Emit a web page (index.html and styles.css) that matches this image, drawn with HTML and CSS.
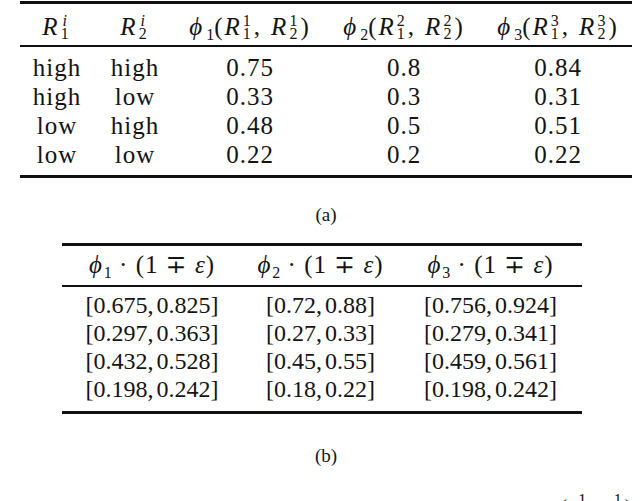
FILE: index.html
```html
<!DOCTYPE html>
<html>
<head>
<meta charset="utf-8">
<link rel="stylesheet" href="styles.css">
</head>
<body>
<div class="figure">
  <table class="tbl tbl-a">
    <thead>
      <tr>
        <th class="a1"><i>R</i><span class="ss"><sup><i>i</i></sup><sub>1</sub></span></th>
        <th class="a2"><i>R</i><span class="ss"><sup><i>i</i></sup><sub>2</sub></span></th>
        <th class="a3"><i>ϕ</i><sub class="s1">1</sub>(<i>R</i><span class="ss"><sup>1</sup><sub>1</sub></span>,<span class="th"></span><i>R</i><span class="ss"><sup>1</sup><sub>2</sub></span>)</th>
        <th class="a4"><i>ϕ</i><sub class="s1">2</sub>(<i>R</i><span class="ss"><sup>2</sup><sub>1</sub></span>,<span class="th"></span><i>R</i><span class="ss"><sup>2</sup><sub>2</sub></span>)</th>
        <th class="a5"><i>ϕ</i><sub class="s1">3</sub>(<i>R</i><span class="ss"><sup>3</sup><sub>1</sub></span>,<span class="th"></span><i>R</i><span class="ss"><sup>3</sup><sub>2</sub></span>)</th>
      </tr>
    </thead>
    <tbody>
      <tr><td>high</td><td>high</td><td>0.75</td><td>0.8</td><td>0.84</td></tr>
      <tr><td>high</td><td>low</td><td>0.33</td><td>0.3</td><td>0.31</td></tr>
      <tr><td>low</td><td>high</td><td>0.48</td><td>0.5</td><td>0.51</td></tr>
      <tr><td>low</td><td>low</td><td>0.22</td><td>0.2</td><td>0.22</td></tr>
    </tbody>
  </table>
  <p class="caption caption-a">(a)</p>

  <table class="tbl tbl-b">
    <thead>
      <tr>
        <th class="b1"><i>ϕ</i><sub class="s1">1</sub> · (1 ∓ <i>ε</i>)</th>
        <th class="b2"><i>ϕ</i><sub class="s1">2</sub> · (1 ∓ <i>ε</i>)</th>
        <th class="b3"><i>ϕ</i><sub class="s1">3</sub> · (1 ∓ <i>ε</i>)</th>
      </tr>
    </thead>
    <tbody>
      <tr><td>[0.675,<span class="th"></span>0.825]</td><td>[0.72,<span class="th"></span>0.88]</td><td>[0.756,<span class="th"></span>0.924]</td></tr>
      <tr><td>[0.297,<span class="th"></span>0.363]</td><td>[0.27,<span class="th"></span>0.33]</td><td>[0.279,<span class="th"></span>0.341]</td></tr>
      <tr><td>[0.432,<span class="th"></span>0.528]</td><td>[0.45,<span class="th"></span>0.55]</td><td>[0.459,<span class="th"></span>0.561]</td></tr>
      <tr><td>[0.198,<span class="th"></span>0.242]</td><td>[0.18,<span class="th"></span>0.22]</td><td>[0.198,<span class="th"></span>0.242]</td></tr>
    </tbody>
  </table>
  <p class="caption caption-b">(b)</p>
  <p class="next">· <i>c</i>(<i>a</i><span class="ss"><sup>1</sup><sub>1</sub></span>,<span class="th"></span><i>a</i><span class="ss"><sup>1</sup><sub>2</sub></span>)</p>
</div>
</body>
</html>
```
FILE: styles.css
```css
html, body {
  margin: 0;
  padding: 0;
  background: #ffffff;
}
body {
  width: 640px;
  height: 501px;
  overflow: hidden;
  color: #141414;
  font-family: "Liberation Serif", "DejaVu Serif", serif;
}
.figure {
  margin-left: 20px;
  width: 612px;
  padding-top: 1px;
}
.tbl {
  border-collapse: collapse;
  font-size: 25px;
  letter-spacing: 1px;
}
.tbl i {
  font-style: italic;
}
.th {
  display: inline-block;
  width: 5px;
}
.tbl th {
  font-weight: normal;
  text-align: center;
  line-height: 29px;
  padding: 8px 0 4px;
  white-space: nowrap;
}
.tbl-a th {
  letter-spacing: 2px;
}
.tbl-a th .th {
  width: 9px;
}
.tbl-a th > i {
  padding-right: 1px;
}
.tbl td {
  text-align: center;
  line-height: 29px;
  padding: 0;
  white-space: nowrap;
}
.tbl thead tr {
  border-top: 3px solid #111;
  border-bottom: 2px solid #111;
}
.tbl tbody tr:last-child {
  border-bottom: 3px solid #111;
}
.tbl-a tbody tr:first-child td {
  padding-top: 6px;
}
.tbl-a tbody tr:last-child td {
  padding-bottom: 6px;
}
.ss {
  display: inline-flex;
  flex-direction: column;
  vertical-align: 9px;
  font-size: 16px;
  line-height: 13px;
  letter-spacing: 0;
  margin: -8px 3px -8px 0;
}
.ss sup, .ss sub {
  vertical-align: baseline;
  font-size: inherit;
  line-height: inherit;
}
.s1 {
  font-size: 16px;
  vertical-align: -5px;
  line-height: 0;
  letter-spacing: 0;
  margin-left: 1px;
}
.tbl-a {
  width: 612px;
}
.a1 { width: 74px; }
.a2 { width: 82px; }
.a3 { width: 148px; }
.a4 { width: 160px; }
.a5 { width: 148px; }
.tbl-b {
  width: 520px;
  margin-left: 42px;
}
.tbl-b th {
  padding: 4px 0 6px;
}
.tbl-b td {
  font-size: 24px;
  letter-spacing: 0;
  line-height: 28px;
}
.tbl-b td .th {
  width: 3px;
}
.tbl-b tbody tr:first-child td {
  padding-top: 4px;
}
.tbl-b tbody tr:last-child td {
  padding-bottom: 8px;
}
.b1 { width: 180px; }
.b2 { width: 157px; }
.b3 { width: 183px; }
.caption {
  font-size: 19px;
  text-align: center;
  margin: 0;
  line-height: 22px;
}
.caption-a {
  padding: 26px 0 17px;
}
.caption-b {
  padding: 31px 0 0;
}
.next {
  margin: 29px 0 0;
  text-align: right;
  font-size: 22px;
  line-height: 22px;
}
.next .th {
  width: 8px;
}
```
